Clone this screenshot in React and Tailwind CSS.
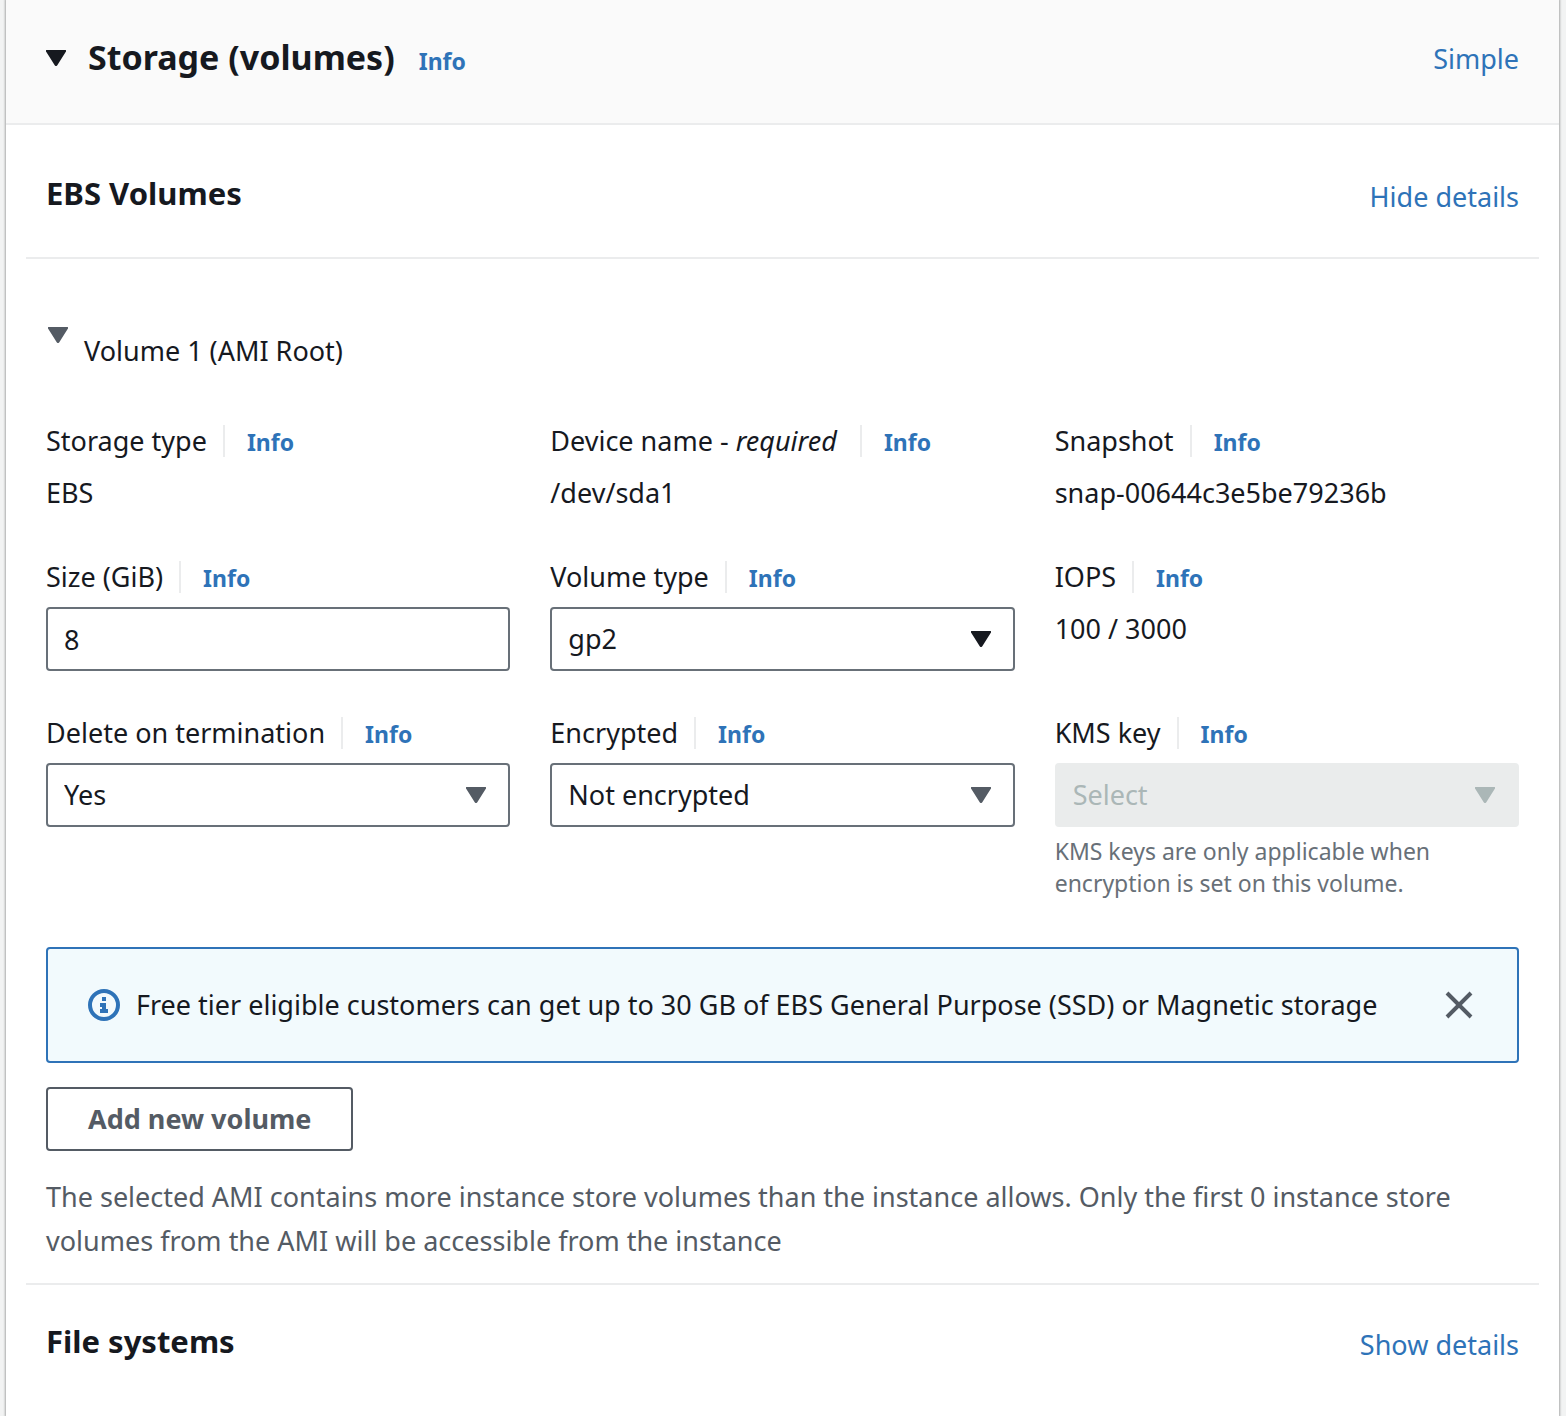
import React, { useState } from "react";

function Caret({ className = "" }) {
  return (
    <svg viewBox="0 0 20 16" className={`h-4 w-5 shrink-0 ${className}`} fill="currentColor" aria-hidden="true">
      <path d="M1 0h18a1 1 0 0 1 .8 1.800L11.300 15.200a1.600 1.600 0 0 1-2.600 0L.2 1.800A1 1 0 0 1 1 0Z" />
    </svg>
  );
}

function InfoLink() {
  return (
    <a href="#info" className="text-[23px]/8 font-bold text-[#2e73b8]">
      Info
    </a>
  );
}

function FieldHeader({ label, htmlFor }) {
  return (
    <div className="flex items-baseline leading-[44px]">
      {htmlFor ? <label htmlFor={htmlFor}>{label}</label> : <span>{label}</span>}
      <span className="ml-4 h-8 w-0.5 self-center bg-[#ebeced]" />
      <span className="ml-[22px]">
        <InfoLink />
      </span>
    </div>
  );
}

function StaticField({ label, value }) {
  return (
    <div className="flex flex-col gap-2">
      <FieldHeader label={label} />
      <div className="leading-[44px]">{value}</div>
    </div>
  );
}

function SelectField({ id, label, options, disabled = false, caret = "text-[#545b64]", hint }) {
  return (
    <div className="flex flex-col gap-2">
      <FieldHeader label={label} htmlFor={id} />
      <div className="relative">
        <select
          id={id}
          disabled={disabled}
          className="block h-16 w-full appearance-none rounded-sm border-2 border-[#687078] bg-white px-4 text-[#16191f] disabled:border-[#eaecec] disabled:bg-[#eaecec] disabled:text-[#abb7b7] disabled:opacity-100"
        >
          {options.map((o) => (
            <option key={o}>{o}</option>
          ))}
        </select>
        <Caret className={`pointer-events-none absolute top-6 right-6 ${caret}`} />
      </div>
      {hint && <p className="text-[23px]/8 text-[#687078]">{hint}</p>}
    </div>
  );
}

export default function App() {
  const [size, setSize] = useState("8");
  const [notice, setNotice] = useState(true);

  return (
    <div className="min-h-screen bg-[#f2f3f3] pr-[7px] pl-1.5 font-['Noto_Sans',sans-serif] text-[27px] text-[#16191f]">
      <main className="min-h-screen bg-white shadow-[0_0_2px_1px_rgba(0,0,0,0.3)]">
        <header className="flex items-start justify-between border-b-2 border-[#ebeced] bg-[#fafafa] px-10 pt-[35px] pb-10">
          <div className="flex items-baseline">
            <button type="button" aria-label="Collapse storage" className="self-center">
              <Caret />
            </button>
            <h1 className="ml-[22px] text-[34px]/[44px] font-bold">Storage (volumes)</h1>
            <span className="ml-6">
              <InfoLink />
            </span>
          </div>
          <a href="#simple" className="leading-[48px] text-[#2e73b8]">Simple</a>
        </header>

        <section className="px-5">
          <div className="flex items-end justify-between border-b-2 border-[#ebeced] px-5 pt-11 pb-10">
            <h2 className="text-[31px]/[48px] font-bold">EBS Volumes</h2>
            <a href="#hide" className="leading-10 text-[#2e73b8]">Hide details</a>
          </div>

          <div className="px-5 pt-[68px] pb-5">
            <div className="flex items-start gap-4 pl-0.5">
              <button type="button" aria-label="Collapse volume 1" className="text-[#545b64]">
                <Caret className="block" />
              </button>
              <h3 className="pt-0.5 leading-[44px]">Volume 1 (AMI Root)</h3>
            </div>

            <div className="mt-[46px] grid grid-cols-3 gap-10">
              <StaticField label="Storage type" value="EBS" />
              <StaticField
                label={
                  <>
                    Device name - <i>required</i>&nbsp;
                  </>
                }
                value="/dev/sda1"
              />
              <StaticField label="Snapshot" value="snap-00644c3e5be79236b" />

              <div className="flex flex-col gap-2">
                <FieldHeader label="Size (GiB)" htmlFor="size" />
                <input
                  id="size"
                  value={size}
                  onChange={(e) => setSize(e.target.value)}
                  className="h-16 w-full rounded-sm border-2 border-[#687078] bg-white px-4"
                />
              </div>
              <SelectField id="vtype" label="Volume type" options={["gp2", "gp3", "io1"]} caret="text-[#16191f]" />
              <StaticField label="IOPS" value="100 / 3000" />

              <SelectField id="del" label="Delete on termination" options={["Yes", "No"]} />
              <SelectField id="enc" label="Encrypted" options={["Not encrypted", "Encrypted"]} />
              <SelectField
                id="kms"
                label="KMS key"
                options={["Select"]}
                disabled
                caret="text-[#abb7b7]"
                hint="KMS keys are only applicable when encryption is set on this volume."
              />
            </div>

            {notice && (
              <div role="status" className="mt-12 flex items-center rounded-sm border-2 border-[#2e73b8] bg-[#f2fafd] py-[34px] pr-11 pl-10">
                <svg viewBox="0 0 32 32" className="size-8 shrink-0 text-[#2e73b8]" fill="currentColor" aria-hidden="true">
                  <circle cx="16" cy="16" r="14" fill="none" stroke="currentColor" strokeWidth="4" />
                  <path d="M14 8h4v4h-4zM12 14h6v6h2v4h-8v-4h2v-2h-2z" />
                </svg>
                <p className="ml-4 flex-1 leading-[44px]">
                  Free tier eligible customers can get up to 30 GB of EBS General Purpose (SSD) or Magnetic storage
                </p>
                <button type="button" aria-label="Dismiss" onClick={() => setNotice(false)} className="text-[#545b64]">
                  <svg viewBox="0 0 28 28" className="block size-7" fill="none" stroke="currentColor" strokeWidth="4" aria-hidden="true">
                    <path d="M2 2l24 24M26 2L2 26" />
                  </svg>
                </button>
              </div>
            )}

            <button type="button" className="mt-6 block h-16 rounded-sm border-2 border-[#545b64] bg-white px-10 font-bold text-[#545b64]">
              Add new volume
            </button>

            <p className="mt-6 leading-[44px] text-[#545b64]">
              The selected AMI contains more instance store volumes than the instance allows. Only the first 0 instance store
              volumes from the AMI will be accessible from the instance
            </p>
          </div>
        </section>

        <section className="px-5">
          <div className="flex items-end justify-between border-t-2 border-[#ebeced] px-5 pt-8">
            <h2 className="text-[31px]/[48px] font-bold">File systems</h2>
            <a href="#show" className="leading-10 text-[#2e73b8]">Show details</a>
          </div>
        </section>
      </main>
    </div>
  );
}
